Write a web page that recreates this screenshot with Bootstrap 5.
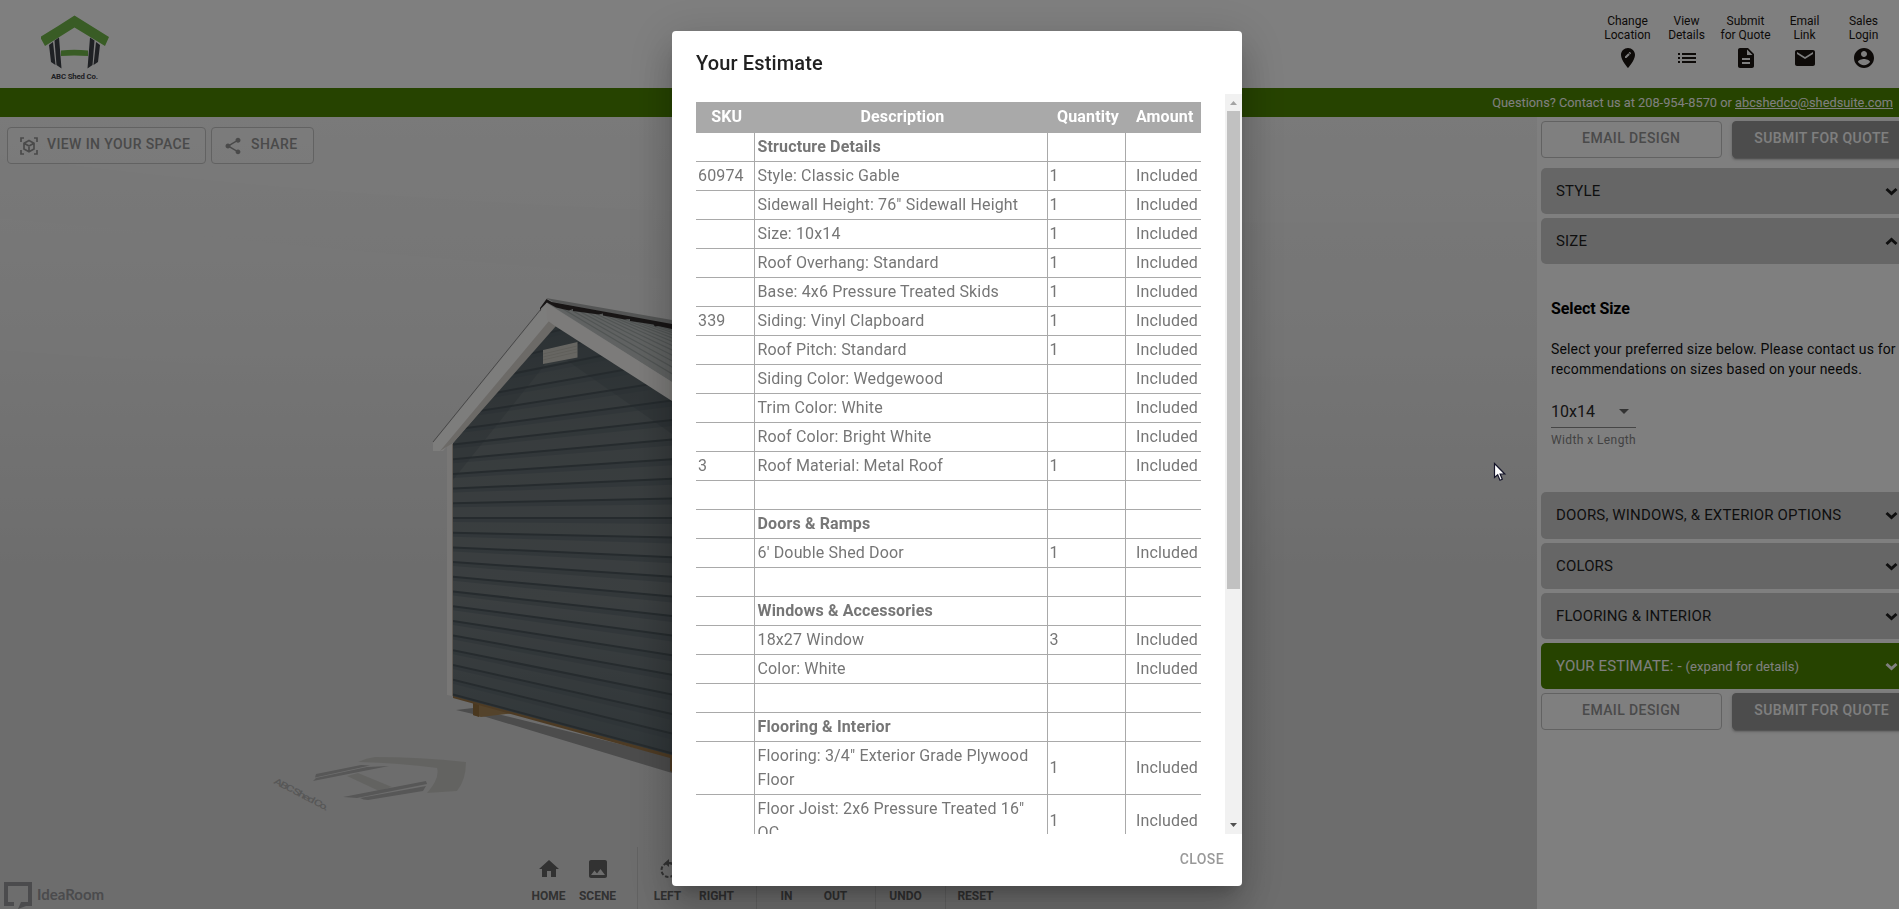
<!DOCTYPE html>
<html lang="en">
<head>
<meta charset="utf-8">
<meta name="viewport" content="width=device-width, initial-scale=1">
<title>ABC Shed Co. - Your Estimate</title>
<link href="https://cdn.jsdelivr.net/npm/bootstrap@5.3.0/dist/css/bootstrap.min.css" rel="stylesheet">
<style>
html,body{height:100%;overflow:hidden}
body{font-family:Roboto,"Liberation Sans",sans-serif;color:#000;background:#fff}
.app{width:1914px;height:909px}
.topbar{height:88px;padding:14px 21px 0 41px}
.brand-logo{width:69px;height:70px}
.quick-link{width:59px;font-size:12px;line-height:14px;color:#1a1411;text-decoration:none}
.quick-link svg{width:24px;height:24px;margin-top:4px;fill:#1a1411}
.contact-bar{height:29px;background:#4d8700;color:#fff;font-size:12.8px;padding-right:21px}
.contact-bar a{color:#fff}
.viewer{width:1537px;height:792px;background:#e2e2e2}
.viewer-actions{padding:10px 7px;gap:5px}
.mbtn{height:37px;border:1px solid #c4c4c4;border-radius:4px;font-size:14px;font-weight:500;letter-spacing:.4px;line-height:35px;color:#949494;background:rgba(255,255,255,.25);padding:0;text-align:center;white-space:nowrap}
.viewer-actions .mbtn{padding-bottom:2px}
.viewer-actions .mbtn svg{position:relative;top:1px}
.options .mbtn{line-height:20px;padding-bottom:4px}
.mbtn svg{fill:#949494}
.mbtn-fill{background:#999;border-color:#999;color:#fff;box-shadow:0 3px 1px -2px rgba(0,0,0,.2),0 2px 2px rgba(0,0,0,.14),0 1px 5px rgba(0,0,0,.12)}
.viewer-tools{left:519px;bottom:0;height:62px}
.tool-group{padding:0 15px 0 5px;border-right:1px solid #c4c4c4}
.tool-group:last-child{border:0}
.tool{width:49px;font-size:12px;font-weight:700;line-height:14px;color:#646464;padding-top:10px}
.tool svg{display:block;width:24px;height:24px;fill:#646464;margin:0 auto 8px}
.idearoom{left:4px;bottom:0;height:27px;color:#96979a;font:700 15px/24px Lato,sans-serif}
.options{width:377px;padding:4px 2px 0 4px;background:#fff}
.opt{height:46px;margin-bottom:4px;padding:0 14px 0 15px;background:#cdcdcd;border-radius:5px;font-size:15px;letter-spacing:.15px;color:#1e1e1e}
.opt-estimate{background:#4d8700;color:#fff}
.opt-estimate>span>span{font-size:13px;letter-spacing:.05px}
.opt-body{height:224px;padding:31px 0 0 10px;width:375px}
.size-select{width:85px;height:32px;border-bottom:1px solid #8c8c8c;font-size:16px;color:#2a2a2a;padding-right:4px}
.modal{width:1914px}
.modal-backdrop{width:1914px}
.modal-dialog.estimate{max-width:570px;height:855px;margin:31px auto}
.estimate .modal-content{border:0;border-radius:4px;box-shadow:0 11px 15px -7px rgba(0,0,0,.2),0 24px 38px 3px rgba(0,0,0,.14),0 9px 46px 8px rgba(0,0,0,.12);color:#767676;height:855px}
.est-head{height:63px;padding:17px 24px 0;font-size:20px;font-weight:500;letter-spacing:.15px;line-height:30px;color:#212121}
.est-scroll{height:740px;overflow:hidden}
.est-pane{width:553px;padding:8px 24px 0}
.est-table{width:505px;table-layout:fixed;border-collapse:collapse;font-size:16px;letter-spacing:.15px;line-height:24px;color:#767676}
.est-table td,.est-table th{padding:2px 3px;border-bottom:1px solid #a9a9a9;border-left:1px solid #a9a9a9;height:29px}
.est-table td:nth-child(odd){padding-left:2px}
.est-table tr>:first-child{border-left:0}
.est-table th{background:#a9a9a9;color:#fff;text-align:center;border-color:#a9a9a9;height:30px;padding:2px}
.est-table td:last-child{text-align:right}
.est-bar{width:17px;background:#f1f1f1}
.est-thumb{width:13px;height:478px;background:#c1c1c1;margin:0 2px}
.est-foot{height:52px;padding:13px 18px 0;font-size:14px;line-height:24px;letter-spacing:.4px;font-weight:500;color:#999}
.pointer{left:1493px;top:462px;z-index:1080}
</style>
</head>
<body>
<div class="app d-flex flex-column">
  <header class="topbar d-flex justify-content-between align-items-start">
    <svg class="brand-logo" viewBox="41 14 69 70">
      <path d="M74.5 15.500 109 37l-4 9-30.500-18.500L45 46l-5-9Q57 27 74.500 15.500z" fill="#72b94b"/>
      <path d="M61 50.500q13-1.500 27 0v5.500q-14-1-27 0z" fill="#72b94b"/>
      <path d="M49 45l4-3 2.500 23-4.500-3zM54.500 40.500l4.500-3 2.500 31-5-3.500zM100 45l-4-3-2.500 23 4.500-3zM94.500 40.500l-4.500-3-2.500 31 5-3.500z" fill="#3f4248"/>
      <text x="51" y="79" font-size="7.800" font-weight="700" textLength="47" fill="#3f4248">ABC Shed Co.</text>
    </svg>
    <nav class="d-flex text-center">
      <a class="quick-link d-block">Change<br>Location<br><svg viewBox="0 0 24 24"><path d="M12 2C8.140 2 5 5.140 5 9c0 5.250 7 13 7 13s7-7.750 7-13c0-3.860-3.140-7-7-7zm-1.560 10H9v-1.440l3.350-3.340 1.430 1.430L10.440 12zm4.450-4.450l-.7.700-1.440-1.440.7-.7c.15-.15.390-.15.540 0l.9.900c.15.150.15.390 0 .54z"/></svg></a>
      <a class="quick-link d-block">View<br>Details<br><svg viewBox="0 0 24 24"><path d="M3 13h2v-2H3v2zm0 4h2v-2H3v2zm0-8h2V7H3v2zm4 4h14v-2H7v2zm0 4h14v-2H7v2zM7 7v2h14V7H7z"/></svg></a>
      <a class="quick-link d-block">Submit<br>for Quote<br><svg viewBox="0 0 24 24"><path d="M14 2H6c-1.100 0-1.990.9-1.990 2L4 20c0 1.100.89 2 1.990 2H18c1.100 0 2-.9 2-2V8l-6-6zm2 16H8v-2h8v2zm0-4H8v-2h8v2zm-3-5V3.500L18.500 9H13z"/></svg></a>
      <a class="quick-link d-block">Email<br>Link<br><svg viewBox="0 0 24 24"><path d="M20 4H4c-1.100 0-1.990.9-1.990 2L2 18c0 1.100.9 2 2 2h16c1.100 0 2-.9 2-2V6c0-1.100-.9-2-2-2zm0 4l-8 5-8-5V6l8 5 8-5v2z"/></svg></a>
      <a class="quick-link d-block">Sales<br>Login<br><svg viewBox="0 0 24 24"><path d="M12 2C6.480 2 2 6.480 2 12s4.480 10 10 10 10-4.480 10-10S17.520 2 12 2zm0 3c1.660 0 3 1.340 3 3s-1.340 3-3 3-3-1.340-3-3 1.340-3 3-3zm0 14.200c-2.500 0-4.710-1.280-6-3.220.03-1.990 4-3.080 6-3.080 1.990 0 5.970 1.090 6 3.080-1.290 1.940-3.500 3.220-6 3.220z"/></svg></a>
    </nav>
  </header>
  <div class="contact-bar d-flex align-items-center justify-content-end">Questions? Contact us at 208-954-8570 or&nbsp;<a href="#">abcshedco@shedsuite.com</a></div>
  <main class="d-flex">
    <section class="viewer position-relative overflow-hidden">
      <svg class="position-absolute top-0 start-0" width="1537" height="792" viewBox="0 117 1537 792">
        <defs>
          <linearGradient id="sky" x2="0" y2="1"><stop offset="0" stop-color="#f3f3f3"/><stop offset=".3" stop-color="#e9e9e9"/><stop offset=".5" stop-color="#dfdfdf"/><stop offset=".58" stop-color="#dadada"/><stop offset="1" stop-color="#dbdbdb"/></linearGradient>
          <linearGradient id="wall" x2="0" y2="1"><stop offset="0" stop-color="#5e696d"/><stop offset=".3" stop-color="#70797c"/><stop offset=".65" stop-color="#767e81"/><stop offset="1" stop-color="#606c71"/></linearGradient>
          <clipPath id="gable"><path d="M453 443 555 325 672 400V755L453 696z"/></clipPath>
          <clipPath id="roof"><path d="M547 303 672 327V382z"/></clipPath>
        </defs>
        <path fill="url(#sky)" d="M0 117h1537v792H0z"/>
        <path fill="#fff" opacity=".13" d="M0 117h1537v105Q500 230 0 155z"/>
        <path fill="#fff" opacity=".07" d="M0 218 680 280H1537V370Q600 400 0 350z"/>
        <path d="M456 710l17-2 199 49v16L486 717z" fill="#989898"/>
        <path d="M473 702v13l8 2 25-3 14-1z" fill="#a98757"/><path d="M473 702v13l6 2v-12z" fill="#94703f"/>
        <path d="M453 695 672 754v18l-2-1v-13L453 698z" fill="#9b7648"/>
        <g clip-path="url(#gable)"><path d="M453 300h220v460H453z" fill="url(#wall)"/><g id="siding"></g><path d="M453 443 555 326l117 74v34L555 352 453 480z" fill="#47545b" opacity=".28"/></g>
        <path d="M447 444h6v252l-6-1z" fill="#f1efed"/><path d="M452 444h1v252h-1z" fill="#c4b9ad"/>
        <path d="M547 303 549 301 672 323V382z" fill="#c0c5c4"/>
        <g clip-path="url(#roof)" id="ribs" stroke="#a2a9a8" stroke-width="1.200"></g>
        <path d="M546 298 672 320v5L553 302z" fill="#a8abaa"/>
        <path d="M540 312v-4l6.500-9 5 3L672 324v5l-14-3-3 .5-1.500-2-23.500-3.500v-2l-5 .5-22-4v-2l-4 1-26-3.500v-2l-4 1.500-13-3-9-5-6 6z" fill="#302b2b"/>
        <path d="M433 443 547 303l6 18-110 130h-10z" fill="#fbfaf9"/>
        <path d="M433 442 541 309" stroke="#777" stroke-width=".8"/>
        <path d="M440 451 549 321l7 5L453 443z" fill="#d8d4ce"/>
        <path d="M546 303 672 382v19L555 326l-8-6z" fill="#f9f7f4"/>
        <path d="M543 350 577.500 342v15.500L543 364z" fill="#cfcdc5"/><path d="M543 354l34-8m-34 11 34-8m-34 11 34-8" stroke="#b9b7ae" stroke-width=".7"/>
        <path d="M358 762q8-4 17-5 45 0 91 5 0 18-9 29l-30 2q13-15 10-25-38-5-79-6z" fill="#c7c7c3"/>
        <path d="M347 776l11-3 34 14-13 4z" fill="#c7c7c3"/>
        <path d="M316 774l45-9 9 .5-55 12zM313 781l3-3 51-11 22-1zM343 797l83-16 1 3-70 14zM360 798l66-12-3 5-55 9q-5 0-8-2z" fill="#aeaeae"/>
        <text transform="matrix(.88 .46 -.35 .6 273 783)" font-size="13" font-weight="500" fill="#aeaeae" textLength="61">ABC Shed Co.</text>
      </svg>
      <div class="viewer-actions position-relative d-flex">
        <button class="mbtn d-flex align-items-center" style="width:199px"><svg width="18" height="18" viewBox="0 0 18 18" class="flex-shrink-0" style="margin:0 9px 0 12px"><path fill="none" stroke="#949494" stroke-width="1.700" d="M1 5V1h3M14 1h3v4M17 13v4h-3M4 17H1v-4M9 3.500l5 2.700v5.800l-5 2.800-5-2.800V6.200zM4 6.200l5 2.900 5-2.900M9 9v5.800"/></svg>VIEW IN YOUR SPACE</button>
        <button class="mbtn d-flex align-items-center" style="width:103px"><svg width="20" height="20" viewBox="0 0 24 24" style="margin:0 8px 0 11px"><path d="M18 16.080c-.76 0-1.440.3-1.960.77L8.910 12.700c.05-.23.090-.46.090-.7s-.04-.47-.09-.7l7.050-4.110c.54.500 1.250.81 2.040.81 1.660 0 3-1.340 3-3s-1.340-3-3-3-3 1.340-3 3c0 .24.040.47.090.7L8.040 9.810C7.500 9.310 6.790 9 6 9c-1.660 0-3 1.340-3 3s1.340 3 3 3c.79 0 1.500-.31 2.040-.81l7.120 4.160c-.05.210-.08.430-.08.650 0 1.610 1.310 2.920 2.920 2.920s2.920-1.310 2.920-2.920-1.310-2.920-2.920-2.920z"/></svg>SHARE</button>
      </div>
      <div class="viewer-tools position-absolute d-flex text-center">
        <div class="tool-group d-flex">
          <div class="tool"><svg viewBox="0 0 24 24"><path d="M10 20v-6h4v6h5v-8h3L12 3 2 12h3v8z"/></svg>HOME</div>
          <div class="tool"><svg viewBox="0 0 24 24"><path d="M21 19V5c0-1.100-.9-2-2-2H5c-1.100 0-2 .9-2 2v14c0 1.100.9 2 2 2h14c1.100 0 2-.9 2-2zM8.500 13.500l2.500 3.010L14.500 12l4.500 6H5l3.500-4.500z"/></svg>SCENE</div>
        </div>
        <div class="tool-group d-flex">
          <div class="tool"><svg viewBox="0 0 24 24"><path d="M13 2v3a8 8 0 018 8h-2a6 6 0 00-6-6v3L8.500 6z"/><circle cx="12.500" cy="13" r="7" fill="none" stroke="#646464" stroke-width="2" stroke-dasharray="3.500 2"/></svg>LEFT</div>
          <div class="tool"><svg viewBox="0 0 24 24"><circle cx="12" cy="13" r="7" fill="none" stroke="#646464" stroke-width="2" stroke-dasharray="3.500 2"/></svg>RIGHT</div>
        </div>
        <div class="tool-group d-flex">
          <div class="tool"><svg viewBox="0 0 24 24"><path d="M11 5h2v6h6v2h-6v6h-2v-6H5v-2h6z"/></svg>IN</div>
          <div class="tool"><svg viewBox="0 0 24 24"><path d="M5 11h14v2H5z"/></svg>OUT</div>
        </div>
        <div class="tool-group d-flex"><div class="tool"><svg viewBox="0 0 24 24"><path d="M12.500 8c-2.650 0-5.050 1-6.900 2.600L2 7v9h9l-3.620-3.620A8 8 0 0120 16l2.400-.8A10.500 10.500 0 0012.500 8z"/></svg>UNDO</div></div>
        <div class="tool-group d-flex"><div class="tool"><svg viewBox="0 0 24 24"><path d="M12 5V1L7 6l5 5V7a6 6 0 11-6 6H4a8 8 0 108-8z"/></svg>RESET</div></div>
      </div>
      <div class="idearoom position-absolute d-flex"><svg width="28" height="27" viewBox="0 0 28 27" style="margin-right:5px"><path fill="#96979a" d="M0 0h28v24H22l-8 3 3-7h7V4H4v16h6v4H0z"/></svg>IdeaRoom</div>
    </section>
    <aside class="options flex-shrink-0">
      <div class="d-flex mb-2 pb-0" style="gap:10px;height:39px"><button class="mbtn" style="width:181px">EMAIL DESIGN</button><button class="mbtn mbtn-fill" style="width:181px">SUBMIT FOR QUOTE</button></div>
      <div class="opt d-flex align-items-center justify-content-between"><span>STYLE</span><svg width="13" height="9" viewBox="0 0 13 9"><path d="M1.500 2l5 4.500 5-4.500" fill="none" stroke="#1e1e1e" stroke-width="3"/></svg></div>
      <div class="opt d-flex align-items-center justify-content-between"><span>SIZE</span><svg width="13" height="9" viewBox="0 0 13 9"><path d="M1.500 7l5-4.500 5 4.500" fill="none" stroke="#1e1e1e" stroke-width="3"/></svg></div>
      <div class="opt-body">
        <h6 class="m-0 fw-bold" style="font-size:16px;line-height:20px;letter-spacing:-.1px">Select Size</h6>
        <p style="font-size:14px;line-height:20px;letter-spacing:.15px;margin:20px 0 17px;color:#111">Select your preferred size below. Please contact us for<br>recommendations on sizes based on your needs.</p>
        <div class="size-select d-flex align-items-center justify-content-between">10x14<svg width="16" height="6" viewBox="0 0 16 6"><path d="M3 0h10L8 5z" fill="#666"/></svg></div>
        <div style="font-size:12px;letter-spacing:.4px;line-height:16px;margin-top:4px;color:#858585">Width x Length</div>
      </div>
      <div class="opt d-flex align-items-center justify-content-between" style="height:47px"><span>DOORS, WINDOWS, &amp; EXTERIOR OPTIONS</span><svg width="13" height="9" viewBox="0 0 13 9"><path d="M1.500 2l5 4.500 5-4.500" fill="none" stroke="#1e1e1e" stroke-width="3"/></svg></div>
      <div class="opt d-flex align-items-center justify-content-between"><span>COLORS</span><svg width="13" height="9" viewBox="0 0 13 9"><path d="M1.500 2l5 4.500 5-4.500" fill="none" stroke="#1e1e1e" stroke-width="3"/></svg></div>
      <div class="opt d-flex align-items-center justify-content-between"><span>FLOORING &amp; INTERIOR</span><svg width="13" height="9" viewBox="0 0 13 9"><path d="M1.500 2l5 4.500 5-4.500" fill="none" stroke="#1e1e1e" stroke-width="3"/></svg></div>
      <div class="opt opt-estimate d-flex align-items-center justify-content-between"><span>YOUR ESTIMATE: - <span>(expand for details)</span></span><svg width="13" height="9" viewBox="0 0 13 9"><path d="M1.500 2l5 4.500 5-4.500" fill="none" stroke="#fff" stroke-width="3"/></svg></div>
      <div class="d-flex" style="gap:10px"><button class="mbtn" style="width:181px">EMAIL DESIGN</button><button class="mbtn mbtn-fill" style="width:181px">SUBMIT FOR QUOTE</button></div>
    </aside>
  </main>
</div>

<div class="modal-backdrop show"></div>
<div class="modal d-block overflow-hidden" tabindex="-1">
  <div class="modal-dialog estimate">
    <div class="modal-content">
      <div class="est-head">Your Estimate</div>
      <div class="est-scroll d-flex">
        <div class="est-pane">
          <table class="est-table">
            <colgroup><col style="width:58px"><col style="width:293px"><col style="width:78px"><col style="width:76px"></colgroup>
            <thead><tr><th style="padding-left:6px">SKU</th><th style="padding-left:6px">Description</th><th style="padding-left:6px">Quantity</th><th style="padding-left:5px">Amount</th></tr></thead>
            <tbody>
              <tr><td></td><td class="fw-bold">Structure Details</td><td></td><td></td></tr>
              <tr><td>60974</td><td>Style: Classic Gable</td><td>1</td><td>Included</td></tr>
              <tr><td></td><td>Sidewall Height: 76" Sidewall Height</td><td>1</td><td>Included</td></tr>
              <tr><td></td><td>Size: 10x14</td><td>1</td><td>Included</td></tr>
              <tr><td></td><td>Roof Overhang: Standard</td><td>1</td><td>Included</td></tr>
              <tr><td></td><td>Base: 4x6 Pressure Treated Skids</td><td>1</td><td>Included</td></tr>
              <tr><td>339</td><td>Siding: Vinyl Clapboard</td><td>1</td><td>Included</td></tr>
              <tr><td></td><td>Roof Pitch: Standard</td><td>1</td><td>Included</td></tr>
              <tr><td></td><td>Siding Color: Wedgewood</td><td></td><td>Included</td></tr>
              <tr><td></td><td>Trim Color: White</td><td></td><td>Included</td></tr>
              <tr><td></td><td>Roof Color: Bright White</td><td></td><td>Included</td></tr>
              <tr><td>3</td><td>Roof Material: Metal Roof</td><td>1</td><td>Included</td></tr>
              <tr><td></td><td></td><td></td><td></td></tr>
              <tr><td></td><td class="fw-bold">Doors &amp; Ramps</td><td></td><td></td></tr>
              <tr><td></td><td>6' Double Shed Door</td><td>1</td><td>Included</td></tr>
              <tr><td></td><td></td><td></td><td></td></tr>
              <tr><td></td><td class="fw-bold">Windows &amp; Accessories</td><td></td><td></td></tr>
              <tr><td></td><td>18x27 Window</td><td>3</td><td>Included</td></tr>
              <tr><td></td><td>Color: White</td><td></td><td>Included</td></tr>
              <tr><td></td><td></td><td></td><td></td></tr>
              <tr><td></td><td class="fw-bold">Flooring &amp; Interior</td><td></td><td></td></tr>
              <tr><td></td><td>Flooring: 3/4" Exterior Grade Plywood Floor</td><td>1</td><td>Included</td></tr>
              <tr><td></td><td>Floor Joist: 2x6 Pressure Treated 16" OC</td><td>1</td><td>Included</td></tr>
            </tbody>
          </table>
        </div>
        <div class="est-bar d-flex flex-column justify-content-start">
          <svg width="17" height="17" viewBox="0 0 17 17" class="flex-shrink-0"><path d="M5 11h7L8.500 7z" fill="#a3a3a3"/></svg>
          <div class="est-thumb"></div>
          <svg width="17" height="17" viewBox="0 0 17 17" class="mt-auto flex-shrink-0"><path d="M5 6h7l-3.500 4z" fill="#505050"/></svg>
        </div>
      </div>
      <div class="est-foot text-end">CLOSE</div>
    </div>
  </div>
</div>
<svg class="pointer position-absolute" width="14" height="20" viewBox="0 0 14 20"><path d="M1.500 1.500v14l3.200-2.800L7 18.200l2.300-1-2.200-5.200h4.700z" fill="#fff" stroke="#15152a" stroke-width="1.200"/></svg>
<script src="https://cdn.jsdelivr.net/npm/bootstrap@5.3.0/dist/js/bootstrap.bundle.min.js"></script>
<script>
// Clapboard courses fan out from the eye-level line at y = 518.
let courses = '';
for (let k = -14; k <= 12; k++) {
  const l = 518 + 14.7 * k, r = 518 + 19.6 * k;
  courses += `<path d="M453 ${l}L672 ${r}V${r + 6}L453 ${l + 4}z" fill="#5b686e" opacity=".6"/><path d="M453 ${l}L672 ${r}" stroke="#4c575c" stroke-width="2"/>`;
}
document.getElementById('siding').innerHTML = courses;
// Standing ribs of the metal roof run parallel to the rake.
let ribs = '';
for (let i = 1; i < 14; i++) ribs += `<path d="M${547 + i * 9} ${303 + i * 1.8}L${707 + i * 9} ${403 - i * 3}"/>`;
document.getElementById('ribs').innerHTML = ribs;
</script>
</body>
</html>
